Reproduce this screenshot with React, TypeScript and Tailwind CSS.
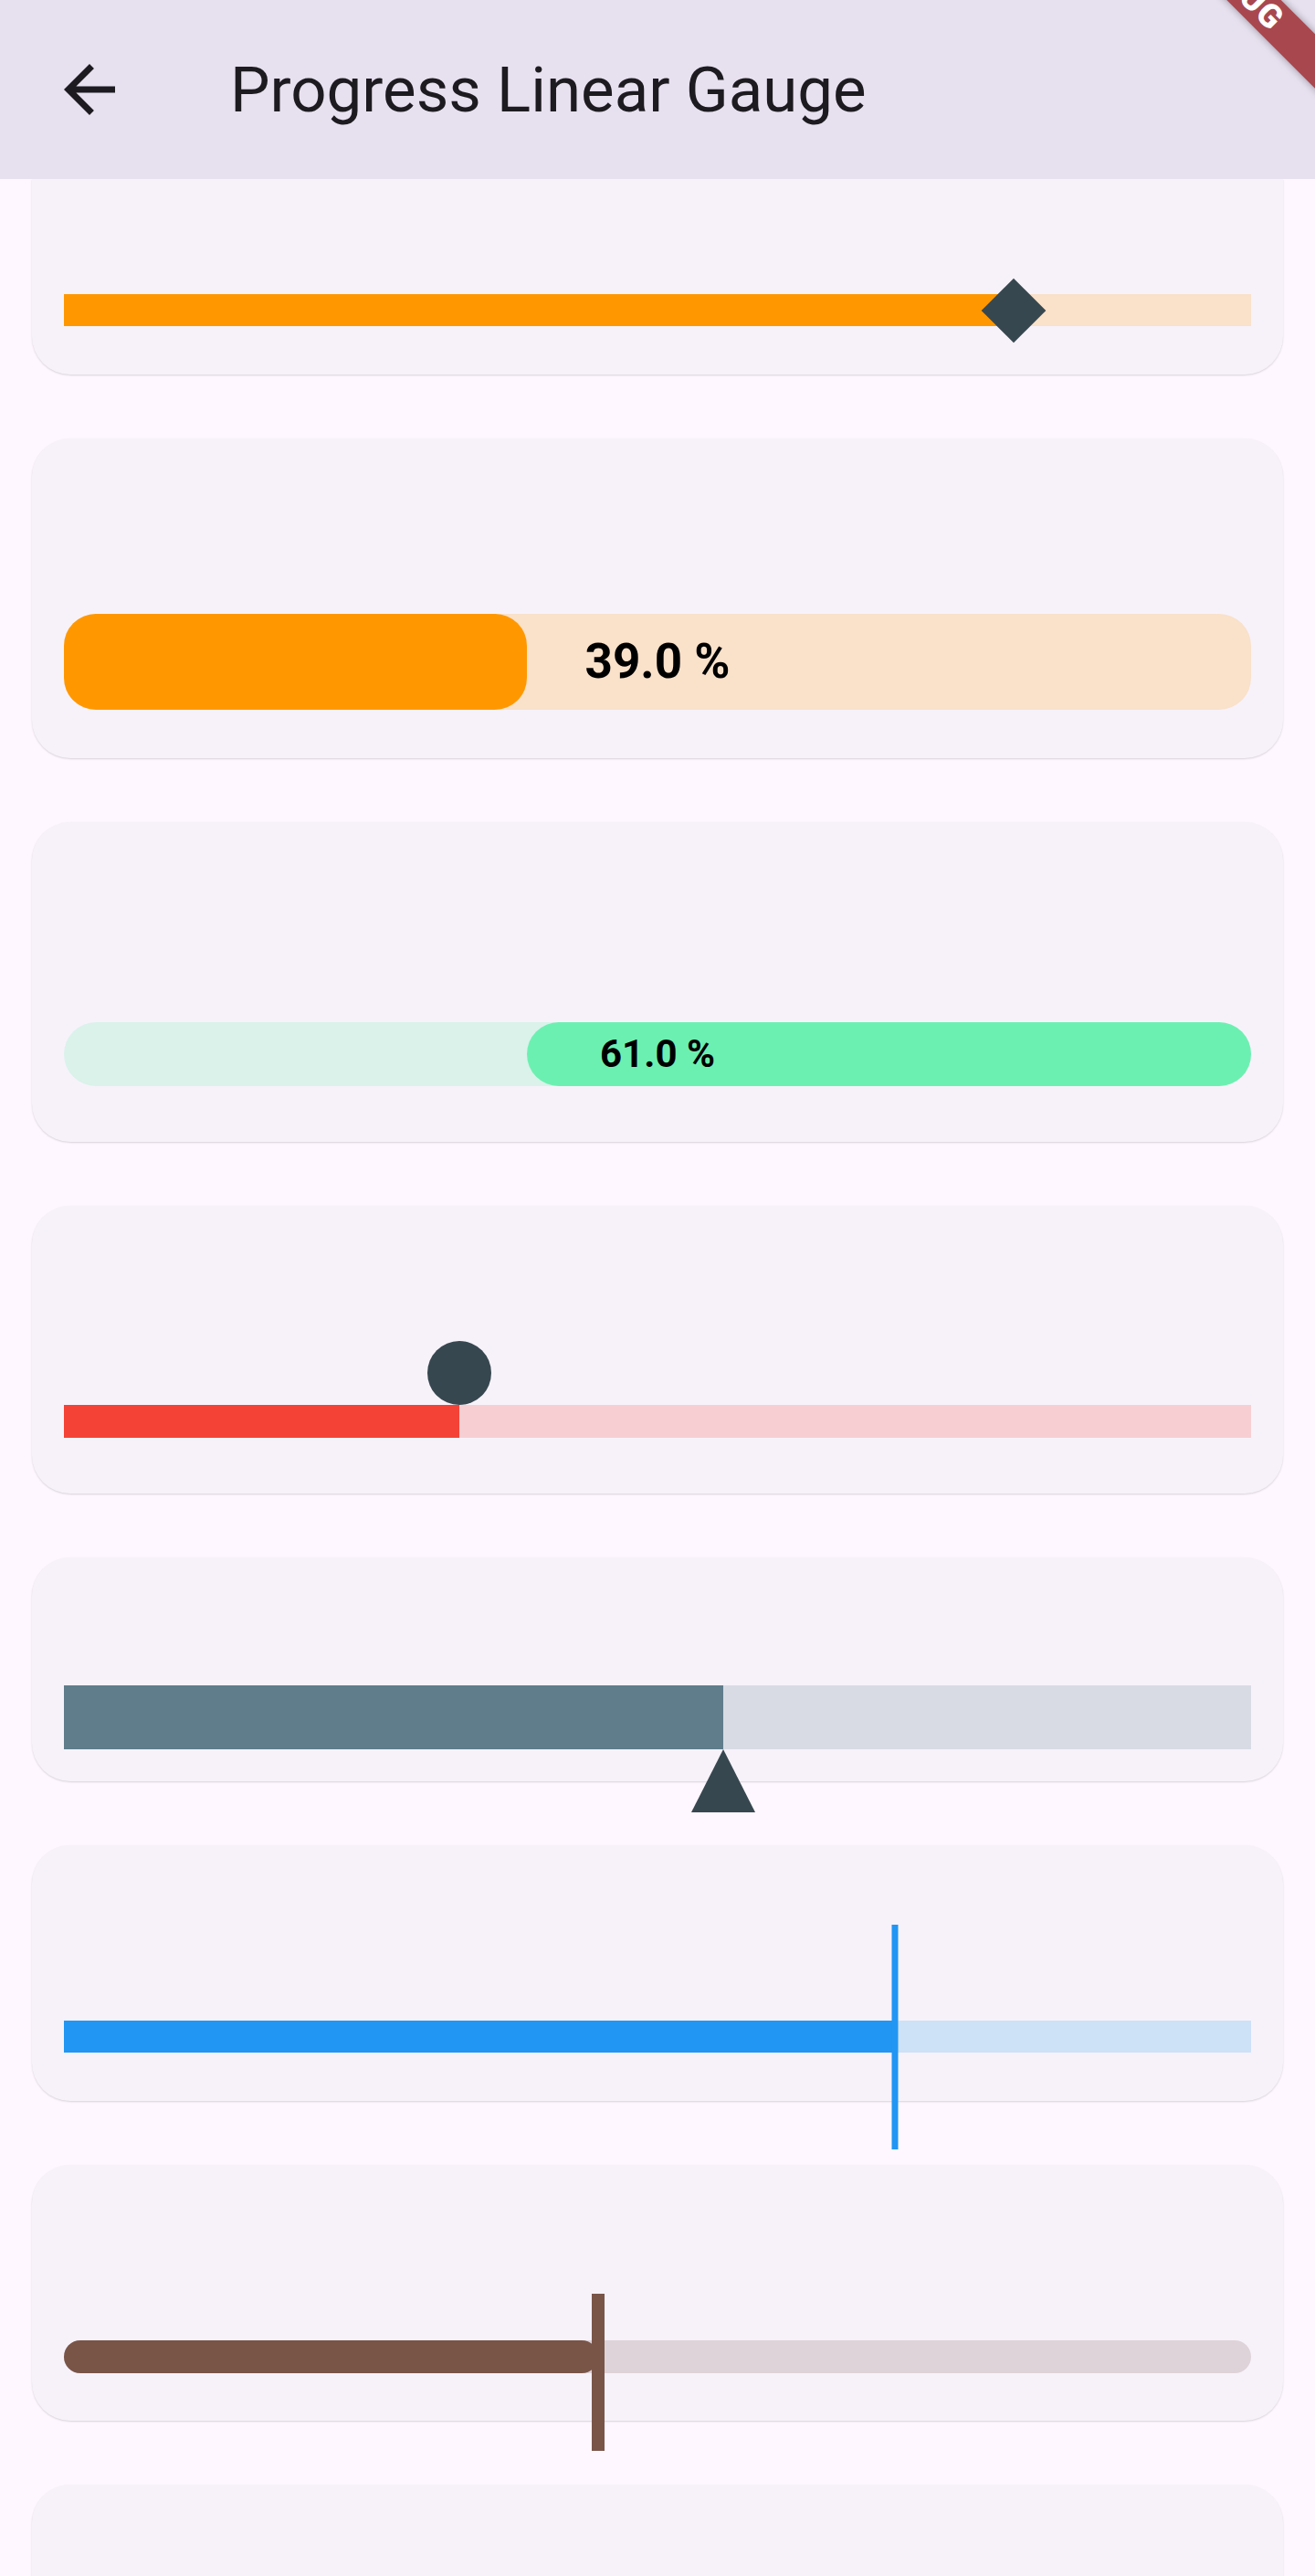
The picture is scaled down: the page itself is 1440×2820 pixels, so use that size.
import React from "react";

function BackArrow() {
  return (
    <svg width="84" height="84" viewBox="0 0 24 24" fill="#1d1b20">
      <path d="M20 11H7.83l5.59-5.59L12 4l-8 8 8 8 1.41-1.41L7.83 13H20v-2z" />
    </svg>
  );
}

function DebugBanner() {
  return (
    <div className="pointer-events-none absolute top-0 right-0 z-20 h-[200px] w-[200px] overflow-hidden">
      <div className="absolute left-[-33px] top-[-37px] flex h-[42px] w-[300px] rotate-45 items-center justify-center bg-[#a9474f] shadow-[0_0_8px_rgba(0,0,0,0.35)]">
        <span className="font-['Roboto',sans-serif] text-[36px] font-black leading-none tracking-[1px] text-white">DEBUG</span>
      </div>
    </div>
  );
}

export default function App() {
  return (
    <div className="relative h-[2820px] overflow-hidden bg-[#fef7ff] font-['Roboto',sans-serif]">
      <DebugBanner />

      {/* app bar */}
      <div className="relative z-10 flex h-[196px] items-center bg-[#e7e0ef] pl-[56px]">
        <BackArrow />
        <h1 className="ml-[112px] text-[69px] font-normal leading-none text-[#1d1b20]">Progress Linear Gauge</h1>
      </div>

      <div className="flex flex-col gap-[70px] px-[35px]">
        {/* diamond pointer (card scrolled under the app bar) */}
        <div className="relative flex h-[214px] flex-col justify-end rounded-b-[42px] bg-[#f7f2fa] px-[35px] pb-[53px] shadow-[0_1px_2px_rgba(0,0,0,0.15)]">
          <div className="relative h-[35px] bg-[#f9e1ca]">
            <div className="h-full bg-[#ff9800]" style={{ width: "80%" }} />
            <div
              className="absolute top-1/2 h-[50px] w-[50px] -translate-x-1/2 -translate-y-1/2 rotate-45 bg-[#37474f]"
              style={{ left: "80%" }}
            />
          </div>
        </div>

        {/* rounded bar with label */}
        <div className="relative flex h-[350px] flex-col justify-end rounded-[42px] bg-[#f7f2fa] px-[35px] pb-[53px] shadow-[0_1px_2px_rgba(0,0,0,0.15)]">
          <div className="relative h-[105px] rounded-[35px] bg-[#f9e1ca]">
            <div className="h-full rounded-[35px] bg-[#ff9800]" style={{ width: "39%" }} />
            <div className="absolute inset-0 flex items-center justify-center">
              <span className="text-[53px] font-bold leading-none text-black">39.0 %</span>
            </div>
          </div>
        </div>

        {/* inverted pill */}
        <div className="relative flex h-[350px] flex-col justify-end rounded-[42px] bg-[#f7f2fa] px-[35px] pb-[61px] shadow-[0_1px_2px_rgba(0,0,0,0.15)]">
          <div className="relative h-[70px] rounded-full bg-[#daf2ea]">
            <div className="absolute top-0 right-0 h-full rounded-full bg-[#6cf0b1]" style={{ width: "61%" }} />
            <div className="absolute inset-0 flex items-center justify-center">
              <span className="text-[42px] font-bold leading-none text-black">61.0 %</span>
            </div>
          </div>
        </div>

        {/* circle pointer */}
        <div className="relative flex h-[315px] flex-col justify-end rounded-[42px] bg-[#f7f2fa] px-[35px] pb-[61px] shadow-[0_1px_2px_rgba(0,0,0,0.15)]">
          <div className="relative h-[36px] bg-[#f7cfd3]">
            <div className="h-full bg-[#f44336]" style={{ width: "33.3%" }} />
            <div
              className="absolute bottom-full h-[70px] w-[70px] -translate-x-1/2 rounded-full bg-[#37474f]"
              style={{ left: "33.3%" }}
            />
          </div>
        </div>

        {/* triangle pointer */}
        <div className="relative flex h-[245px] flex-col justify-end rounded-[42px] bg-[#f7f2fa] px-[35px] pb-[35px] shadow-[0_1px_2px_rgba(0,0,0,0.15)]">
          <div className="relative h-[70px] bg-[#d8dbe3]">
            <div className="h-full bg-[#607d8b]" style={{ width: "55.5%" }} />
            <svg
              className="absolute top-full -translate-x-1/2"
              style={{ left: "55.5%" }}
              width="70"
              height="69"
              viewBox="0 0 70 69"
            >
              <polygon points="35,0 70,69 0,69" fill="#37474f" />
            </svg>
          </div>
        </div>

        {/* line pointer */}
        <div className="relative flex h-[280px] flex-col justify-end rounded-[42px] bg-[#f7f2fa] px-[35px] pb-[53px] shadow-[0_1px_2px_rgba(0,0,0,0.15)]">
          <div className="relative h-[35px] bg-[#cde1f7]">
            <div className="h-full bg-[#2196f3]" style={{ width: "70%" }} />
            <div
              className="absolute top-1/2 h-[246px] w-[7px] -translate-x-1/2 -translate-y-1/2 bg-[#2196f3]"
              style={{ left: "70%" }}
            />
          </div>
        </div>

        {/* rounded line pointer */}
        <div className="relative flex h-[280px] flex-col justify-end rounded-[42px] bg-[#f7f2fa] px-[35px] pb-[52px] shadow-[0_1px_2px_rgba(0,0,0,0.15)]">
          <div className="relative h-[36px] rounded-full bg-[#ded3d8]">
            <div className="h-full rounded-full bg-[#795548]" style={{ width: "45%" }} />
            <div
              className="absolute top-[-51px] h-[172px] w-[14px] -translate-x-1/2 bg-[#795548]"
              style={{ left: "45%" }}
            />
          </div>
        </div>

        <div className="h-[300px] rounded-[42px] bg-[#f7f2fa] shadow-[0_1px_2px_rgba(0,0,0,0.15)]" />
      </div>
    </div>
  );
}
